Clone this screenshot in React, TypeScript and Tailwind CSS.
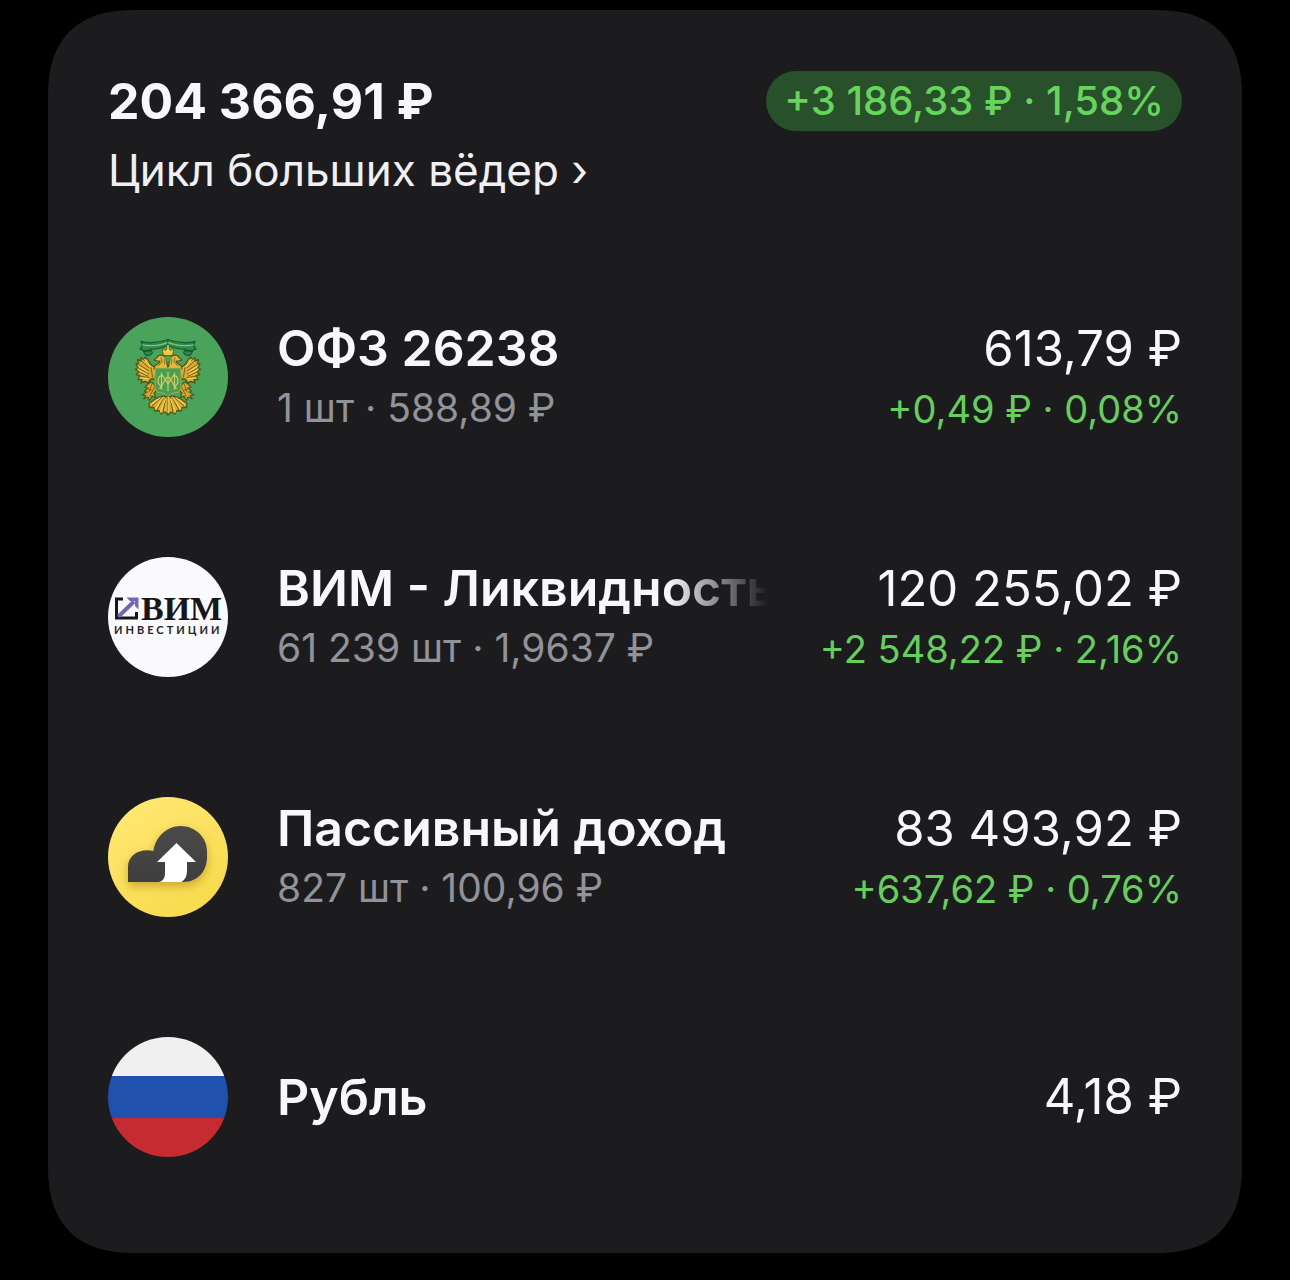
import type { ReactNode } from "react";

function EagleHalf() {
  return (
    <g strokeLinejoin="round" strokeLinecap="round">
      {/* ribbon */}
      <path
        d="M60 22.5 C52 25.5 43 27 33 24.5 L34.5 28.5 L32 32 C35 32.5 36 33.5 36.5 36.5 C39 39.5 43 39 44.5 35.5 L42 32.5 C49 32.5 54 31 60 28.5 Z"
        fill="#2f8a4e"
        stroke="#17613a"
        strokeWidth="1.3"
      />
      <path d="M35 28 C44 29.5 52 28.5 60 25.5" fill="none" stroke="#8fc46a" strokeWidth="1.3" strokeDasharray="1 1" />
      <path d="M36.5 34 L42 33.5" stroke="#124d30" strokeWidth="1.6" />
      {/* wing */}
      <path
        d="M48 50 C43 49 41 46 40 42.5 L37 40 L36.5 43 L33 40.5 L33 44 L29.5 42.5 L30.5 46.5 L28 47 L30 50.5 L27.5 52.5 L31 54.5 L28.5 57.5 L32 59 L30 62.5 L34 62.5 L33 66 L37 64.5 L40 66 L43 62 L47 62 Z"
        fill="#dcae33"
        stroke="#4d5a1d"
        strokeWidth="1.4"
      />
      <path
        d="M33 43.5 L41 51 M31 47.5 L41 54 M31 51.5 L41 57 M32 55.5 L40 59 M33 59.5 L41 60.5 M43 50 L44.5 60"
        stroke="#775c18"
        strokeWidth="1"
      />
      <path d="M36.5 42.5 L43 50 M30.5 49 L39 55 M30.5 53 L39 57.5 M32 61 L40 61.5" stroke="#f7dc62" strokeWidth="1" />
      {/* neck and head */}
      <path
        d="M47 49 C48 47 52 47 52 44 L49 44 L46 43 L49 40.5 C50 37.5 55 37.5 57 40 C59.5 43 58 48 60 50 L60 52 L46 52 Z"
        fill="#e3b93b"
        stroke="#4d5a1d"
        strokeWidth="1.2"
      />
      <path d="M53 40.5 L54 45 L50 49 M56 42 L56.5 47" stroke="#7b601a" strokeWidth="0.8" fill="none" />
      {/* leg and claw */}
      <path
        d="M43 65 L40 67 L37 70 L40 71 L36.5 74 L39 75 L34 78 L38 78.5 L35.5 82 L40 80 L41.5 83.5 L44 79 L48 81 L46 76 L48 74 L46 67 Z"
        fill="#d9a92f"
        stroke="#4d5a1d"
        strokeWidth="1.2"
      />
      <path d="M44 67 L41 75 M46 71 L42 79 M40 72 L44 73" stroke="#7b601a" strokeWidth="0.9" />
      {/* tail feathers */}
      <path
        d="M60 79 L53 79.5 L47 82 L41 86.5 L41.5 90.5 L46 90.5 L46.5 94 L51 93.5 L53 97 L57 95 L60 98 Z"
        fill="#dcae33"
        stroke="#4d5a1d"
        strokeWidth="1.3"
      />
      <path d="M54 80 L44 89 M56 80 L49 93 M58 80 L55 95" stroke="#705717" strokeWidth="1" />
      <path d="M52 81 L43 87.5 M55.5 80 L47.5 92 M57.5 82 L52.5 95 M59.7 80 V96" stroke="#f6dc65" strokeWidth="1" />
    </g>
  );
}

function OfzIcon() {
  return (
    <svg viewBox="0 0 120 120" className="size-full" aria-hidden="true">
      <rect width="120" height="120" fill="#4aa35a" />
      <EagleHalf />
      <g transform="translate(120 0) scale(-1 1)">
        <EagleHalf />
      </g>
      {/* crown */}
      <path
        d="M55.5 38.5 L54 31 L57.5 33.5 L60 29.5 L62.5 33.5 L66 31 L64.5 38.5 Z"
        fill="#f4ca3e"
        stroke="#5b601c"
        strokeWidth="0.9"
      />
      <path d="M60 28 V31" stroke="#f4ca3e" strokeWidth="1.4" />
      <path d="M57 39.5 H63 L62.5 43 L60 45.5 L57.5 43 Z" fill="#4aa35a" />
      {/* shield */}
      <path
        d="M47 51 H73 V71 C73 75 69 75.5 66 76 C63 76.5 61 78 60 79.5 C59 78 57 76.5 54 76 C51 75.5 47 75 47 71 Z"
        fill="#46a056"
        stroke="#d9b03a"
        strokeWidth="0.8"
      />
      {/* monogram */}
      <path
        d="M53.5 55.5 V72.5 M66.5 55.5 V72.5 M60 55 V74 M53.5 57 L60 67 L66.5 57 M51.5 72 L59 60 M68.5 72 L61 60 M53 58.5 C49 60.5 49 67 53 69 M67 58.5 C71 60.5 71 67 67 69"
        fill="none"
        stroke="#d8cb58"
        strokeWidth="1.2"
      />
    </svg>
  );
}

function VimIcon() {
  return (
    <svg viewBox="0 0 120 120" className="size-full" aria-hidden="true">
      <rect width="120" height="120" fill="#fafafc" />
      <path d="M15 42 H8.5 V61 H28.5 V55" fill="none" stroke="#17171b" strokeWidth="3" />
      <path d="M10.5 59.5 L26 44.5" stroke="#6d69b4" strokeWidth="4" />
      <path d="M18.5 40.5 H30.5 V52.5 L27 49 V44 H22 Z" fill="#6d69b4" />
      <text
        x="33"
        y="63"
        fontFamily="'Liberation Serif', serif"
        fontWeight="700"
        fontSize="34"
        fill="#17171b"
      >
        ВИМ
      </text>
      <text
        x="6"
        y="77"
        fontFamily="Lato, sans-serif"
        fontWeight="700"
        fontSize="11"
        letterSpacing="3"
        fill="#26262b"
      >
        ИНВЕСТИЦИИ
      </text>
    </svg>
  );
}

function IncomeIcon() {
  return (
    <svg viewBox="0 0 120 120" className="size-full" aria-hidden="true">
      <defs>
        <linearGradient id="sun" x1="0.1" y1="0.1" x2="0.6" y2="0.9">
          <stop offset="0" stopColor="#ffe873" />
          <stop offset="1" stopColor="#f8dc50" />
        </linearGradient>
        <linearGradient id="cloud" x1="0" y1="0" x2="0" y2="1">
          <stop offset="0" stopColor="#4b4a49" />
          <stop offset="1" stopColor="#3e3e3f" />
        </linearGradient>
        <filter id="shade" x="-30%" y="-30%" width="160%" height="170%">
          <feDropShadow dx="0" dy="4" stdDeviation="5" floodColor="#a5780c" floodOpacity="0.55" />
        </filter>
      </defs>
      <rect width="120" height="120" fill="url(#sun)" />
      <path
        d="M20 85 V70 C20 58 32 51 45.5 54 C47 40 59 29 72.5 29 C87 29 99 40 99 54 V60 C99 74 90 85 75 85 Z"
        fill="url(#cloud)"
        filter="url(#shade)"
      />
      <path d="M68.5 46 L88 65 H79 V73 C79 78 78 82 73.5 85 H51 C55 84 57 81 57 76 V65 H49 Z" fill="#fff" />
    </svg>
  );
}

function RubleIcon() {
  return (
    <svg viewBox="0 0 120 120" className="size-full" aria-hidden="true">
      <rect width="120" height="39" fill="#f0f0f0" />
      <rect y="39" width="120" height="42" fill="#2151af" />
      <rect y="81" width="120" height="39" fill="#c52b31" />
    </svg>
  );
}

type Position = {
  name: string;
  faded?: boolean;
  amount?: string;
  value: string;
  profit?: string;
  icon: ReactNode;
};

const positions: Position[] = [
  {
    name: "ОФЗ 26238",
    amount: "1 шт · 588,89 ₽",
    value: "613,79 ₽",
    profit: "+0,49 ₽ · 0,08%",
    icon: <OfzIcon />,
  },
  {
    name: "ВИМ - Ликвидность",
    faded: true,
    amount: "61 239 шт · 1,9637 ₽",
    value: "120 255,02 ₽",
    profit: "+2 548,22 ₽ · 2,16%",
    icon: <VimIcon />,
  },
  {
    name: "Пассивный доход",
    amount: "827 шт · 100,96 ₽",
    value: "83 493,92 ₽",
    profit: "+637,62 ₽ · 0,76%",
    icon: <IncomeIcon />,
  },
  {
    name: "Рубль",
    value: "4,18 ₽",
    icon: <RubleIcon />,
  },
];

const fade = "[mask-image:linear-gradient(to_right,black_calc(100%-100px),transparent)]";

function PositionRow({ name, faded, amount, value, profit, icon }: Position) {
  return (
    <li className="flex items-center">
      <div className="size-30 shrink-0 overflow-hidden rounded-full">{icon}</div>
      <div className="ml-[49px] min-w-0 flex-1">
        <p
          className={`overflow-hidden whitespace-nowrap text-[50px] leading-[62px] font-semibold text-[#f8f8fb] ${faded ? fade : ""}`}
        >
          {name}
        </p>
        {amount && <p className="whitespace-nowrap text-[39px] leading-[58px] text-[#929299]">{amount}</p>}
      </div>
      <div className="ml-13 shrink-0 text-right whitespace-nowrap">
        <p className="text-[49px] leading-[64px] text-[#f8f8fb]">{value}</p>
        {profit && <p className="text-[38px] leading-[56px] text-[#66cf5b]">{profit}</p>}
      </div>
    </li>
  );
}

export default function App() {
  return (
    <main className="min-h-screen bg-black px-12 pt-2.5 pb-7 font-['Inter',sans-serif]">
      <section className="rounded-[88px] bg-[#1c1c1e] px-15 pt-[61px] pb-24 [corner-shape:superellipse(1.3)]">
        <header className="flex items-start justify-between">
          <div>
            <h1 className="text-[50px] leading-[60px] font-bold text-[#f8f8fb]">204 366,91 ₽</h1>
            <a href="#portfolio" className="block text-[44px] leading-[78px] text-[#f0f0f4]">
              Цикл больших вёдер ›
            </a>
          </div>
          <p className="rounded-full bg-[#28502a] px-[18px] text-[40px] leading-[60px] font-medium text-[#66d45d]">
            +3 186,33 ₽ · 1,58%
          </p>
        </header>

        <ul id="portfolio" className="mt-27 flex flex-col gap-30">
          {positions.map((position) => (
            <PositionRow key={position.name} {...position} />
          ))}
        </ul>
      </section>
    </main>
  );
}
